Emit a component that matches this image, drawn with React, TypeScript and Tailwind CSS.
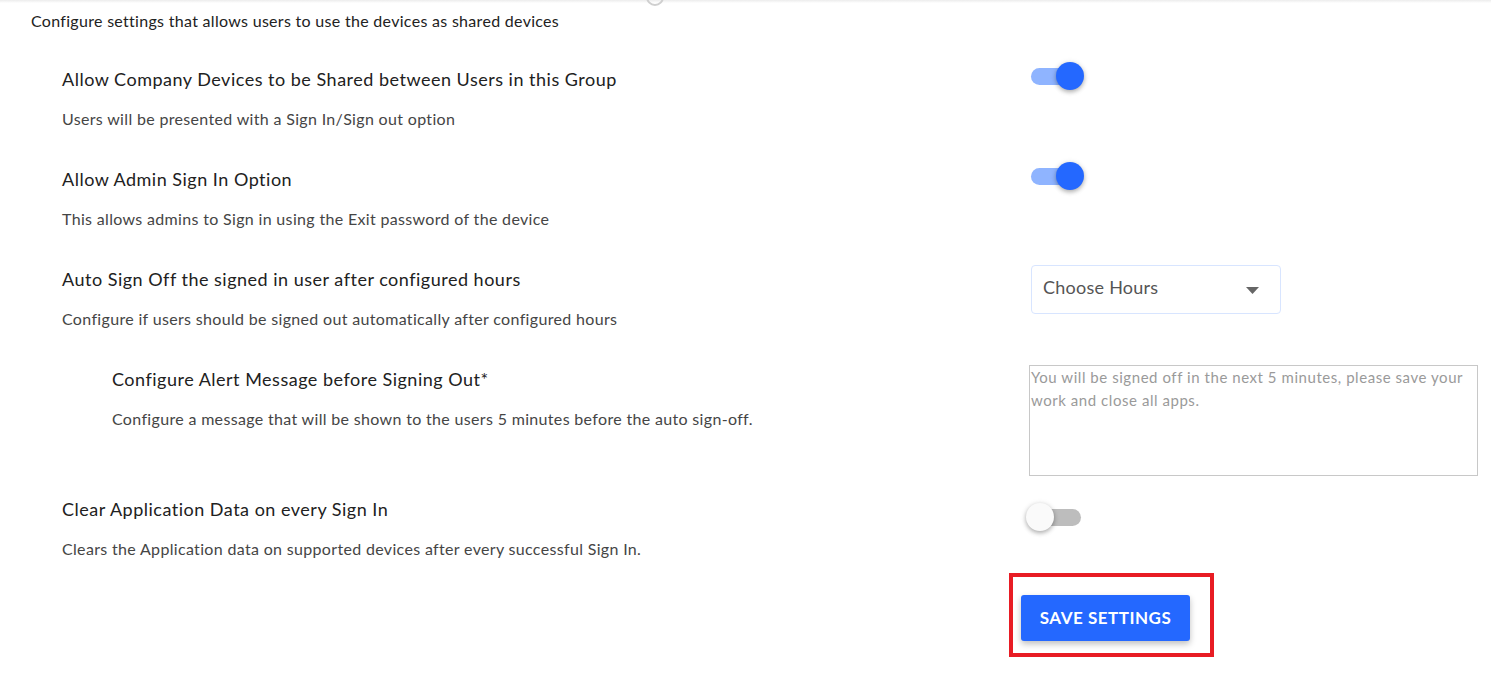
import React from "react";

const font = { fontFamily: "Lato, 'Noto Sans', sans-serif" };

function Toggle({ on }: { on: boolean }) {
  return (
    <div className="relative w-[50px] h-[28px]">
      <div
        className={`absolute left-0 top-[5.5px] w-[50px] h-[17px] rounded-full ${
          on ? "bg-[#8fb4ff]" : "bg-[#bdbdbd]"
        }`}
      />
      <div
        className={`absolute top-0 w-[28px] h-[28px] rounded-full shadow-[0_2px_4px_rgba(0,0,0,0.25),0_1px_6px_rgba(0,0,0,0.12)] ${
          on ? "left-[25px] bg-[#2468ff]" : "left-[-5px] bg-[#fafafa]"
        }`}
      />
    </div>
  );
}

function Row({
  title,
  desc,
  indent,
  control,
  pb,
}: {
  title: string;
  desc: string;
  indent?: boolean;
  control: React.ReactNode;
  pb: string;
}) {
  return (
    <div className={`flex items-start ${pb}`}>
      <div className={`w-[1029px] shrink-0 ${indent ? "pl-[112px]" : "pl-[62px]"}`}>
        <div className="text-[18px] leading-[36px] tracking-[0.5px] text-[#212121]">{title}</div>
        <div className="mt-[10px] text-[16px] leading-[24px] tracking-[0.33px] text-[#454545]">{desc}</div>
      </div>
      {control}
    </div>
  );
}

export default function App() {
  return (
    <div className="relative w-[1491px] h-[674px] bg-white overflow-hidden" style={font}>
      <div className="h-[3px] bg-gradient-to-b from-[#ececec] to-white" />
      <div className="absolute left-[646px] top-[-12px] w-[18px] h-[18px] rounded-full border-2 border-[#cfcfcf]" />
      <div className="pl-[31px] mt-[6px] text-[16px] leading-[24px] tracking-[0.3px] text-[#222]">
        Configure settings that allows users to use the devices as shared devices
      </div>
      <div className="mt-[28px]">
        <Row
          title="Allow Company Devices to be Shared between Users in this Group"
          desc="Users will be presented with a Sign In/Sign out option"
          pb="pb-[30px]"
          control={
            <div className="mt-[1px] pl-[2px]">
              <Toggle on />
            </div>
          }
        />
        <Row
          title="Allow Admin Sign In Option"
          desc="This allows admins to Sign in using the Exit password of the device"
          pb="pb-[30px]"
          control={
            <div className="mt-[1px] pl-[2px]">
              <Toggle on />
            </div>
          }
        />
        <Row
          title="Auto Sign Off the signed in user after configured hours"
          desc="Configure if users should be signed out automatically after configured hours"
          pb="pb-[30px]"
          control={
            <div className="mt-[4px] ml-[2px] w-[250px] h-[49px] rounded-[4px] border border-[#d8e5ff] flex items-center justify-between pl-[11px] pr-[21px] pb-[4px]">
              <span className="text-[18px] tracking-[0.25px] text-[#555]">Choose Hours</span>
              <svg width="13" height="7" viewBox="0 0 13 7" className="mt-[6px]">
                <polygon points="0,0 13,0 6.5,7" fill="#666" />
              </svg>
            </div>
          }
        />
        <Row
          title="Configure Alert Message before Signing Out*"
          desc="Configure a message that will be shown to the users 5 minutes before the auto sign-off."
          indent
          pb="pb-[15px]"
          control={
            <textarea
              className="mt-[4px] w-[449px] h-[111px] border border-[#c8c8c8] pl-[1px] pt-0 text-[15px] leading-[23px] tracking-[0.55px] text-[#333] placeholder:text-[#9a9a9a] resize-none outline-none"
              style={font}
              placeholder="You will be signed off in the next 5 minutes, please save your work and close all apps."
            />
          }
        />
        <Row
          title="Clear Application Data on every Sign In"
          desc="Clears the Application data on supported devices after every successful Sign In."
          pb="pb-[12px]"
          control={
            <div className="mt-[12px] pl-[2px]">
              <Toggle on={false} />
            </div>
          }
        />
        <div className="pl-[1009px]">
          <div className="inline-block border-4 border-[#e81c24] pl-[8px] pt-[18px] pr-[20px] pb-[12px]">
            <button className="w-[169px] h-[46px] rounded-[3px] bg-[#2468ff] text-white font-bold text-[17px] tracking-[0.5px] shadow-[0_3px_6px_rgba(0,0,0,0.25)]">
              SAVE SETTINGS
            </button>
          </div>
        </div>
      </div>
    </div>
  );
}
